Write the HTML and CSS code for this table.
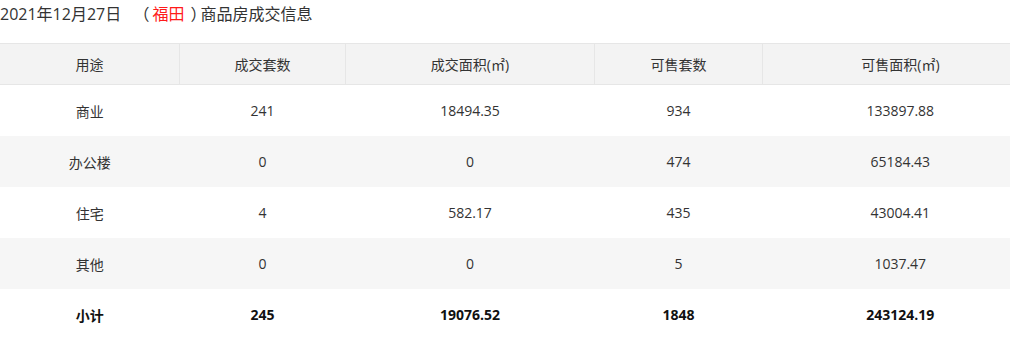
FILE: index.html
```html
<!DOCTYPE html>
<html>
<head>
    <title>商品房成交信息</title>
    <link rel="stylesheet" href="styles.css">
</head>
<body>
    <div class="title">2021年12月27日 &nbsp;<span class="paren">（<span class="area">福田</span>）</span>商品房成交信息</div>

    <table class="deal-table">
        <thead>
            <tr>
                <th class="c1">用途</th>
                <th class="c2">成交套数</th>
                <th class="c3">成交面积(㎡)</th>
                <th class="c4">可售套数</th>
                <th class="c5">可售面积(㎡)</th>
            </tr>
        </thead>
        <tbody>
            <tr><td>商业</td><td>241</td><td>18494.35</td><td>934</td><td>133897.88</td></tr>
            <tr><td>办公楼</td><td>0</td><td>0</td><td>474</td><td>65184.43</td></tr>
            <tr><td>住宅</td><td>4</td><td>582.17</td><td>435</td><td>43004.41</td></tr>
            <tr><td>其他</td><td>0</td><td>0</td><td>5</td><td>1037.47</td></tr>
            <tr class="total"><td>小计</td><td>245</td><td>19076.52</td><td>1848</td><td>243124.19</td></tr>
        </tbody>
    </table>
</body>
</html>
```

FILE: styles.css
```css
body {
    margin: 0;
    overflow: hidden;
    font-family: "Open Sans", "Noto Sans CJK SC", sans-serif;
    color: #333;
    background-color: white;
}

.title {
    font-size: 16px;
    height: 28px;
    line-height: 28px;
    margin-bottom: 15px;
}

.paren {
    font-feature-settings: "halt";
    margin-left: 12px;
    margin-right: 2px;
}

.area {
    color: #ff1a1a;
    margin: 0 6px 0 3px;
}

.deal-table {
    width: 1038px;
    border-collapse: collapse;
    table-layout: fixed;
    font-size: 14px;
}

.deal-table th {
    height: 40px;
    font-weight: normal;
    background-color: #f3f3f3;
    border-top: 1px solid #e6e6e6;
    border-bottom: 1px solid #e6e6e6;
    border-left: 1px solid #e6e6e6;
    padding: 0;
}

.deal-table th:first-child {
    border-left: none;
}

.c1 { width: 179px; }
.c2 { width: 165px; }
.c3 { width: 248px; }
.c4 { width: 167px; }

.deal-table td {
    height: 51px;
    padding: 0;
    text-align: center;
}

.deal-table tbody tr:nth-child(even) {
    background-color: #f6f6f6;
}

.total td {
    font-weight: bold;
    color: #111;
}
```
